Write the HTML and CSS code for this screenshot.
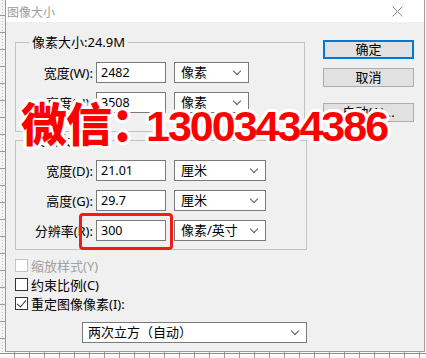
FILE: index.html
```html
<html>

<head>
	<title>图像大小</title>

	<link rel="stylesheet" href="styles.css">
</head>

<body>
	<div class="screen">
		<div class="desk">
			<div class="ruler-left"></div>

			<div class="dialog">
				<div class="titlebar">
					<span class="title">图像大小</span>
					<svg class="close" width="11" height="11" viewBox="0 0 11 11">
						<path d="M0.5 0.5 L10.5 10.5 M10.5 0.5 L0.5 10.5" stroke="#8a8a8a" stroke-width="1" fill="none"/>
					</svg>
				</div>

				<div class="body">
					<div class="main">
						<div class="group g1">
							<div class="legend">像素大小:24.9M</div>
							<div class="row">
								<span class="lbl">宽度(W):</span>
								<span class="field">2482</span>
								<span class="select short">像素<i class="chev"></i></span>
							</div>
							<div class="row">
								<span class="lbl">高度(H):</span>
								<span class="field">3508</span>
								<span class="select short">像素<i class="chev"></i></span>
							</div>
						</div>

						<div class="group g2">
							<div class="legend">文档大小:</div>
							<div class="row">
								<span class="lbl">宽度(D):</span>
								<span class="field">21.01</span>
								<span class="select">厘米<i class="chev"></i></span>
							</div>
							<div class="row">
								<span class="lbl">高度(G):</span>
								<span class="field">29.7</span>
								<span class="select">厘米<i class="chev"></i></span>
							</div>
							<div class="row">
								<span class="lbl">分辨率(R):</span>
								<span class="field">300</span>
								<span class="select">像素/英寸<i class="chev"></i></span>
							</div>
						</div>

						<div class="checks">
							<div class="check disabled"><i class="box"></i>缩放样式(Y)</div>
							<div class="check"><i class="box"></i>约束比例(C)</div>
							<div class="check"><i class="box on"></i>重定图像像素(I):</div>
						</div>

						<span class="select wide">两次立方（自动）<i class="chev"></i></span>
					</div>

					<div class="buttons">
						<div class="btn default">确定</div>
						<div class="btn">取消</div>
						<div class="btn auto">自动(A)...</div>
					</div>
				</div>
			</div>
		</div>

		<div class="ruler-bottom"></div>

		<div class="mark"><span class="cn">微信：</span><span class="num">13003434386</span></div>
		<div class="highlight"></div>
	</div>
</body>

</html>
```

FILE: styles.css
```css
body {
	margin: 0;
	background-color: #ffffff;
	font-family: "Noto Sans", "Noto Sans CJK SC", sans-serif;
	font-size: 13px;
	color: #000000;
}

.screen {
	position: relative;
	width: 426px;
	height: 358px;
	overflow: hidden;
}

.desk {
	display: flex;
	height: 352px;
}

.ruler-left {
	width: 5px;
	background-color: #f3f3f3;
	background-image:
		repeating-linear-gradient(to bottom, transparent 0, transparent 15px, #9a9a9a 15px, #9a9a9a 16px, transparent 16px, transparent 17px),
		repeating-linear-gradient(to bottom, #c4c4c4 0, #c4c4c4 1px, transparent 1px, transparent 3px);
	background-size: 5px 17px, 1px 3px;
	background-position: 0 0, 2px 0;
	background-repeat: repeat-y;
}

.dialog {
	width: 420px;
	box-sizing: border-box;
	border-left: 1px solid #9a9a9a;
	border-right: 1px solid #9a9a9a;
	border-bottom: 1px solid #9a9a9a;
	display: flex;
	flex-direction: column;
}

.titlebar {
	height: 22px;
	background-color: #ffffff;
	display: flex;
	align-items: center;
	justify-content: space-between;
}

.title {
	padding-left: 1px;
	font-size: 12px;
	color: #9c9c9c;
	font-family: "Noto Sans CJK SC", sans-serif;
}

.close {
	margin-right: 21px;
	margin-top: 1px;
}

.body {
	flex: 1;
	background-color: #f0f0f0;
	display: flex;
	padding-left: 9px;
}

.main {
	width: 292px;
	display: flex;
	flex-direction: column;
	align-items: flex-start;
}

.group {
	box-sizing: border-box;
	border: 1px solid #c2c2c2;
	display: flex;
	flex-direction: column;
	gap: 9px;
}

.g1 {
	width: 290px;
	margin-top: 20px;
	padding-bottom: 18px;
}

.g2 {
	width: 292px;
	margin-top: 8px;
	padding-bottom: 8px;
}

.legend {
	align-self: flex-start;
	margin: -9px 0 3px 13px;
	padding: 0 3px;
	height: 16px;
	line-height: 16px;
	background-color: #f0f0f0;
}

.row {
	display: flex;
	align-items: center;
	height: 21px;
}

.lbl {
	width: 77px;
	text-align: right;
	white-space: nowrap;
}

.field,
.select {
	box-sizing: border-box;
	height: 21px;
	line-height: 19px;
	border: 1px solid #7a7a7a;
	background-color: #ffffff;
	padding-left: 4px;
	white-space: nowrap;
}

.field {
	width: 70px;
	margin-left: 3px;
	font-size: 12.5px;
}

.select {
	width: 92px;
	margin-left: 8px;
	padding-left: 6px;
	display: flex;
	align-items: center;
	position: relative;
}

.select.short {
	width: 75px;
}

.select.wide {
	width: 225px;
	margin-top: 9px;
	margin-left: 67px;
	padding-left: 5px;
}

.chev {
	margin-left: auto;
	margin-right: 8px;
	width: 5px;
	height: 5px;
	border-right: 1px solid #5a5a5a;
	border-bottom: 1px solid #5a5a5a;
	transform: translateY(-2px) rotate(45deg);
}

.checks {
	margin-top: 6px;
	display: flex;
	flex-direction: column;
}

.check {
	height: 19px;
	display: flex;
	align-items: center;
	white-space: nowrap;
}

.check.disabled {
	color: #a0a0a0;
}

.box {
	box-sizing: border-box;
	width: 13px;
	height: 13px;
	border: 1px solid #333333;
	background-color: #ffffff;
	margin-right: 3px;
	position: relative;
}

.disabled .box {
	border-color: #c4c4c4;
}

.box.on::after {
	content: "";
	position: absolute;
	left: 3px;
	top: 0px;
	width: 4px;
	height: 8px;
	border-right: 1px solid #333333;
	border-bottom: 1px solid #333333;
	transform: rotate(40deg);
}

.buttons {
	margin-left: 16px;
	display: flex;
	flex-direction: column;
}

.btn {
	box-sizing: border-box;
	width: 91px;
	height: 19px;
	line-height: 17px;
	text-align: center;
	background-color: #e1e1e1;
	border: 1px solid #adadad;
	margin-top: 9px;
}

.btn.default {
	margin-top: 18px;
	border: 2px solid #0078d7;
	line-height: 15px;
}

.btn.auto {
	margin-top: 16px;
}

.ruler-bottom {
	height: 6px;
	background-color: #fbfbfb;
	background-image:
		linear-gradient(to bottom, transparent 0, transparent 1px, #8c8c8c 1px, #8c8c8c 2px, transparent 2px),
		repeating-linear-gradient(to right, transparent 0, transparent 14px, #9a9a9a 14px, #9a9a9a 15px);
}

.mark {
	position: absolute;
	left: 21px;
	top: 97px;
	line-height: 48px;
	white-space: nowrap;
	color: #ff0000;
	font-weight: bold;
	text-shadow:
		3px 0 0 #fff, -3px 0 0 #fff, 0 3px 0 #fff, 0 -3px 0 #fff,
		2px 2px 0 #fff, -2px 2px 0 #fff, 2px -2px 0 #fff, -2px -2px 0 #fff,
		3px 1px 0 #fff, -3px 1px 0 #fff, 3px -1px 0 #fff, -3px -1px 0 #fff,
		1px 3px 0 #fff, -1px 3px 0 #fff, 1px -3px 0 #fff, -1px -3px 0 #fff;
}

.cn {
	font-family: "Noto Sans CJK SC", sans-serif;
	font-size: 46px;
	font-weight: 900;
	letter-spacing: -1px;
}

.num {
	font-family: "Liberation Sans", sans-serif;
	font-size: 43px;
	letter-spacing: -2px;
	margin-left: -10px;
}

.highlight {
	position: absolute;
	left: 79px;
	top: 213px;
	width: 94px;
	height: 37px;
	box-sizing: border-box;
	border: 3px solid #f01c1c;
	border-radius: 4px;
}
```
